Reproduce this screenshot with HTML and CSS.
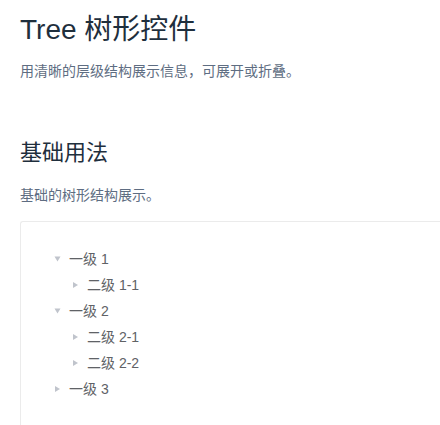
FILE: index.html
```html
<!DOCTYPE html>
<html lang="zh-CN">
<head>
<meta charset="utf-8">
<link rel="stylesheet" href="styles.css">
</head>
<body>
<div class="page">
  <h2 class="title">Tree 树形控件</h2>
  <p class="desc">用清晰的层级结构展示信息，可展开或折叠。</p>
  <h3 class="section">基础用法</h3>
  <p class="desc small">基础的树形结构展示。</p>
  <div class="demo">
    <div class="tree">
      <div class="node"><span class="caret open"></span><span class="label">一级 1</span></div>
      <div class="node lv2"><span class="caret"></span><span class="label">二级 1-1</span></div>
      <div class="node"><span class="caret open"></span><span class="label">一级 2</span></div>
      <div class="node lv2"><span class="caret"></span><span class="label">二级 2-1</span></div>
      <div class="node lv2"><span class="caret"></span><span class="label">二级 2-2</span></div>
      <div class="node"><span class="caret"></span><span class="label">一级 3</span></div>
    </div>
  </div>
</div>
</body>
</html>
```
FILE: styles.css
```css
html, body {
  margin: 0;
  padding: 0;
  background: #fff;
  overflow: hidden;
}
body {
  font-family: "Liberation Sans", "Noto Sans CJK SC", sans-serif;
  color: #1f2f3d;
}
.page {
  height: 425px;
  box-sizing: border-box;
  padding-left: 20px;
  display: flex;
  flex-direction: column;
}
.title {
  margin: 0;
  padding-top: 12px;
  font-size: 28px;
  font-weight: 400;
  line-height: 36px;
  color: #1f2f3d;
}
.desc {
  margin: 13px 0 0;
  font-size: 14px;
  line-height: 20px;
  color: #5e6d82;
}
.section {
  margin: 57px 0 0;
  font-size: 22px;
  font-weight: 400;
  line-height: 30px;
  color: #1f2f3d;
}
.desc.small {
  margin-top: 17px;
}
.demo {
  flex: 1;
  margin-top: 16px;
  border: 1px solid #ebebeb;
  border-right: 0;
  border-bottom: 0;
  border-radius: 3px 0 0 0;
  padding: 24px;
}
.tree {
  color: #606266;
  font-size: 14px;
}
.node {
  display: flex;
  align-items: center;
  height: 26px;
}
.node.lv2 {
  padding-left: 18px;
}
.caret {
  width: 24px;
  height: 26px;
  display: flex;
  align-items: center;
  justify-content: center;
}
.caret::before {
  content: "";
  width: 0;
  height: 0;
  border-top: 3.5px solid transparent;
  border-bottom: 3.5px solid transparent;
  border-left: 5px solid #c0c4cc;
}
.caret.open::before {
  transform: rotate(90deg);
}
.label {
  line-height: 26px;
}
```
